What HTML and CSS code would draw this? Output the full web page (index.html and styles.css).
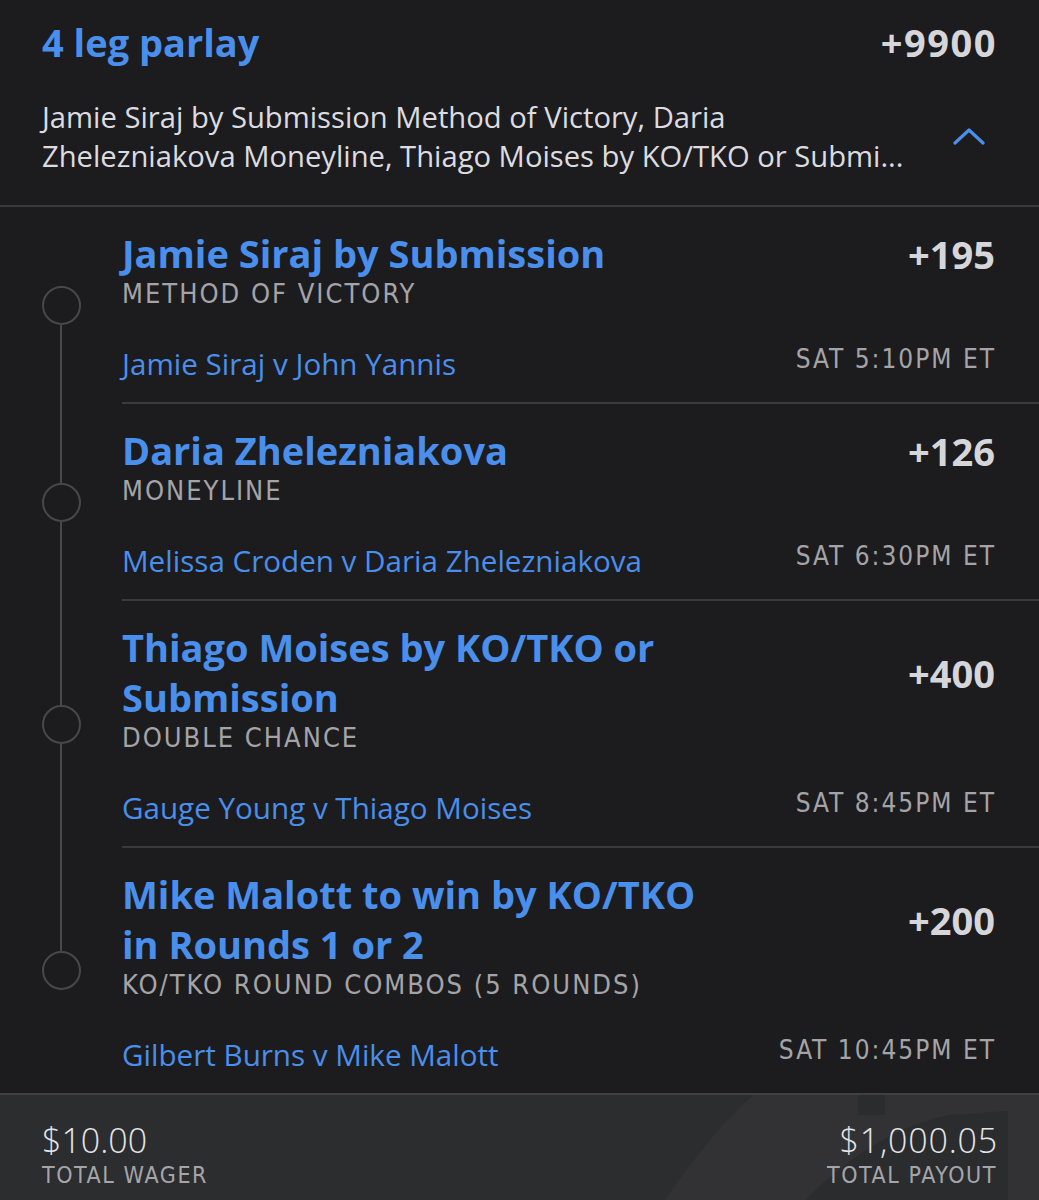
FILE: index.html
```html
<!DOCTYPE html>
<html lang="en">
<head>
<meta charset="utf-8">
<title>4 leg parlay</title>
<link rel="stylesheet" href="styles.css">
</head>
<body>
<div class="slip">
  <header class="head">
    <div class="head-top">
      <h1 class="parlay-title">4 leg parlay</h1>
      <div class="parlay-odds">+9900</div>
    </div>
    <div class="head-sum">
      <p class="summary">Jamie Siraj by Submission Method of Victory, Daria<br>Zhelezniakova Moneyline, Thiago Moises by KO/TKO or Submi...</p>
      <svg class="chev" width="32" height="18" viewBox="0 0 32 18"><path d="M2 16 L16 3 L30 16" fill="none" stroke="#4a8fec" stroke-width="3.2" stroke-linecap="round" stroke-linejoin="round"/></svg>
    </div>
  </header>

  <section class="legs">
    <div class="leg first">
      <div class="rail"><span class="seg top"></span><span class="dot"></span><span class="seg bot"></span></div>
      <div class="leg-body">
        <div class="leg-main">
          <div class="leg-info">
            <div class="leg-title">Jamie Siraj by Submission</div>
            <div class="leg-type">METHOD OF VICTORY</div>
          </div>
          <div class="leg-odds">+195</div>
        </div>
        <div class="leg-meta">
          <span class="matchup">Jamie Siraj v John Yannis</span>
          <span class="time">SAT 5:10PM ET</span>
        </div>
      </div>
    </div>

    <div class="leg">
      <div class="rail"><span class="seg top"></span><span class="dot"></span><span class="seg bot"></span></div>
      <div class="leg-body">
        <div class="leg-main">
          <div class="leg-info">
            <div class="leg-title">Daria Zhelezniakova</div>
            <div class="leg-type">MONEYLINE</div>
          </div>
          <div class="leg-odds">+126</div>
        </div>
        <div class="leg-meta">
          <span class="matchup">Melissa Croden v Daria Zhelezniakova</span>
          <span class="time">SAT 6:30PM ET</span>
        </div>
      </div>
    </div>

    <div class="leg">
      <div class="rail"><span class="seg top"></span><span class="dot"></span><span class="seg bot"></span></div>
      <div class="leg-body">
        <div class="leg-main">
          <div class="leg-info">
            <div class="leg-title">Thiago Moises by KO/TKO or<br>Submission</div>
            <div class="leg-type">DOUBLE CHANCE</div>
          </div>
          <div class="leg-odds">+400</div>
        </div>
        <div class="leg-meta">
          <span class="matchup">Gauge Young v Thiago Moises</span>
          <span class="time">SAT 8:45PM ET</span>
        </div>
      </div>
    </div>

    <div class="leg last">
      <div class="rail"><span class="seg top"></span><span class="dot"></span><span class="seg bot"></span></div>
      <div class="leg-body">
        <div class="leg-main">
          <div class="leg-info">
            <div class="leg-title">Mike Malott to win by KO/TKO<br>in Rounds 1 or 2</div>
            <div class="leg-type">KO/TKO ROUND COMBOS (5 ROUNDS)</div>
          </div>
          <div class="leg-odds">+200</div>
        </div>
        <div class="leg-meta">
          <span class="matchup">Gilbert Burns v Mike Malott</span>
          <span class="time">SAT 10:45PM ET</span>
        </div>
      </div>
    </div>
  </section>

  <footer class="foot">
    <svg class="mark" width="420" height="110" viewBox="0 0 420 110" aria-hidden="true">
      <path d="M2 110 C30 70 60 30 94 0 L420 0 L420 110 Z" fill="#323235"/>
      <path d="M199 0 L226 0 L226 20 L199 20 Z" fill="#2b2c2e"/>
      <path d="M141 110 C190 60 240 30 290 20 L349 16 L349 110 Z" fill="#2b2c2e"/>
    </svg>
    <div class="tot">
      <div class="amt">$10.00</div>
      <div class="lbl">TOTAL WAGER</div>
    </div>
    <div class="tot right">
      <div class="amt">$1,000.05</div>
      <div class="lbl">TOTAL PAYOUT</div>
    </div>
  </footer>
</div>
</body>
</html>
```

FILE: styles.css
```css
* { box-sizing: border-box; }
html, body { margin: 0; padding: 0; }
body {
  background: #1c1c1e;
  font-family: "Open Sans", "Noto Sans", sans-serif;
  width: 1039px;
  height: 1200px;
  overflow: hidden;
}
.slip { display: flex; flex-direction: column; }

.head {
  padding: 17px 44px 29px 42px;
  border-bottom: 2px solid #3a3a3c;
}
.head-top {
  display: flex;
  justify-content: space-between;
  align-items: center;
  height: 50px;
}
.parlay-title {
  margin: 0;
  font-size: 38px;
  font-weight: 700;
  color: #4a8fec;
  line-height: 50px;
}
.parlay-odds {
  font-size: 38px;
  font-weight: 700;
  letter-spacing: 1.5px;
  margin-right: -2px;
  color: #d6d6da;
  line-height: 50px;
}
.head-sum {
  margin-top: 31px;
  display: flex;
  align-items: center;
  justify-content: space-between;
}
.summary {
  margin: 0;
  font-size: 29.2px;
  line-height: 39px;
  color: #dcdce0;
  white-space: nowrap;
}
.chev { margin-right: 10px; margin-top: -2px; }

.legs { display: flex; flex-direction: column; }
.leg { display: flex; }
.rail {
  width: 122px;
  flex: none;
  display: flex;
  flex-direction: column;
  align-items: center;
}
.seg { flex: 1; width: 2px; background: #48484b; }
.first .seg.top, .last .seg.bot { background: transparent; }
.dot {
  flex: none;
  width: 39px;
  height: 39px;
  border-radius: 50%;
  border: 2.5px solid #48484b;
}
.leg-body {
  flex: 1;
  padding: 21px 44px 22px 0;
  border-bottom: 2px solid #3a3a3c;
}
.last .leg-body { border-bottom: none; }
.leg-main {
  display: flex;
  justify-content: space-between;
  align-items: center;
}
.leg-title {
  font-size: 38px;
  font-weight: 700;
  line-height: 50px;
  color: #4a8fec;
}
.leg-type {
  font-family: "Liberation Sans Narrow", "DejaVu Sans Condensed", Roboto, sans-serif;
  font-size: 27px;
  line-height: 30px;
  letter-spacing: 2px;
  margin-top: 1px;
  color: #a4a4a8;
}
.leg-odds {
  font-size: 38px;
  font-weight: 700;
  color: #d6d6da;
  margin-top: -30px;
}
.leg-meta {
  margin-top: 37px;
  display: flex;
  justify-content: space-between;
  align-items: center;
  height: 34px;
}
.matchup {
  font-size: 29.6px;
  color: #4a8fec;
}
.time {
  font-family: "Liberation Sans Narrow", "DejaVu Sans Condensed", Roboto, sans-serif;
  font-size: 26px;
  letter-spacing: 2px;
  margin-right: -1px;
  color: #a4a4a8;
  margin-top: -8px;
}

.foot {
  position: relative;
  overflow: hidden;
  background: #2c2d2f;
  border-top: 2px solid #414144;
  display: flex;
  justify-content: space-between;
  padding: 26px 42px 20px 42px;
  height: 110px;
}
.mark { position: absolute; right: -40px; top: 0; }
.tot { position: relative; display: flex; flex-direction: column; }
.tot.right { align-items: flex-end; }
.amt {
  font-size: 34px;
  font-weight: 300;
  color: #e4e4e8;
  line-height: 38px;
}
.right .amt { letter-spacing: 0.8px; margin-right: -1px; }
.lbl {
  font-family: "Liberation Sans Narrow", "DejaVu Sans Condensed", Roboto, sans-serif;
  font-size: 23px;
  letter-spacing: 1.6px;
  color: #a5a5a9;
  line-height: 32px;
}
```
